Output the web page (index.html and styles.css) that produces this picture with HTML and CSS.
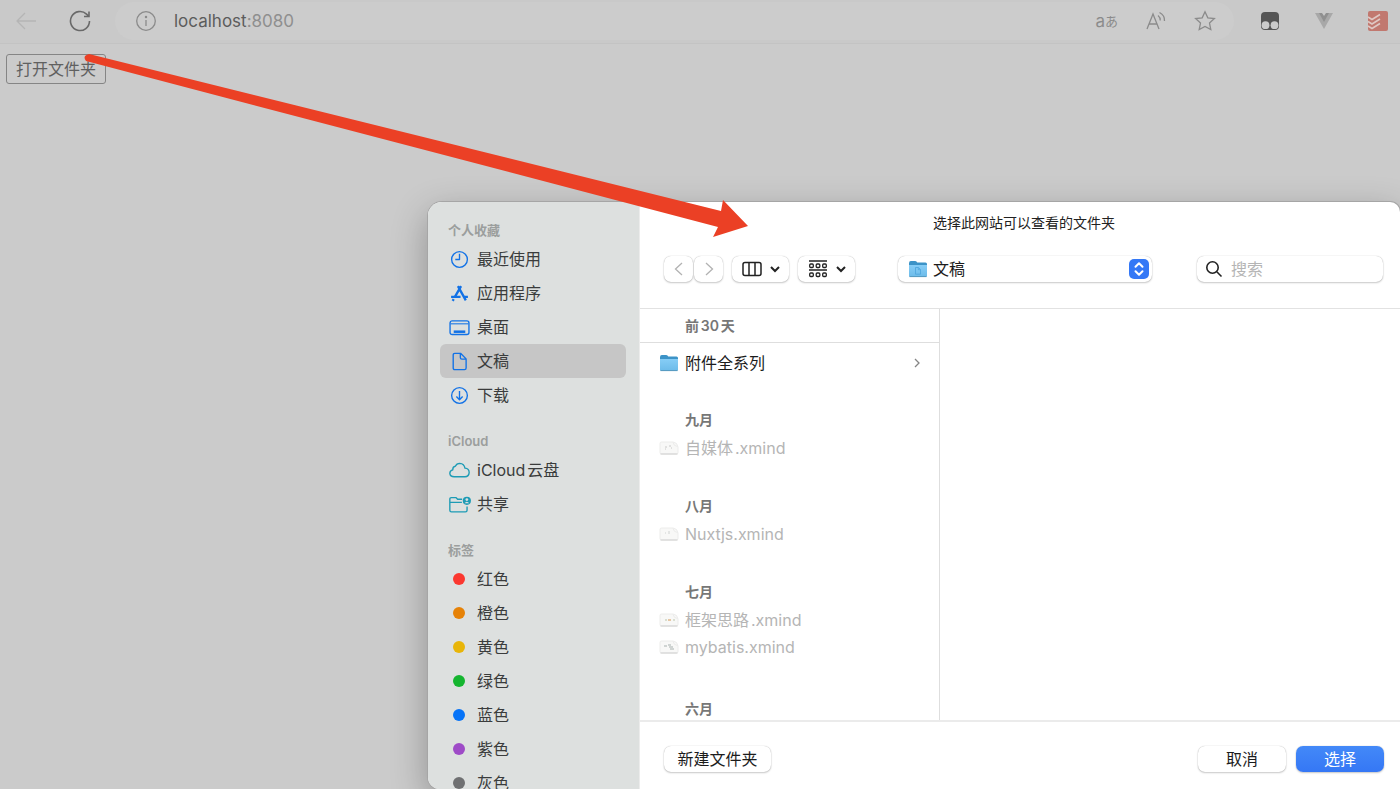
FILE: index.html
```html
<!DOCTYPE html>
<html lang="zh-CN">
<head>
<meta charset="utf-8">
<title>localhost:8080</title>
<link rel="stylesheet" href="styles.css">
</head>
<body>
<svg class="sprite" aria-hidden="true">
  <defs>
    <linearGradient id="folder-front" x1="0" y1="0" x2="0" y2="1">
      <stop offset="0" stop-color="#86cdf6"/><stop offset="1" stop-color="#6cbbe9"/>
    </linearGradient>
    <symbol id="folder" viewBox="0 0 20 18">
      <path d="M1 3.200Q1 1 2.800 1h4.400q.8 0 1.300.6l.7.9h8.300Q19 2.500 19 4v4H1z" fill="#3c93c7"/>
      <path d="M1 5h18v10.500q0 1.500-1.500 1.500h-15Q1 17 1 15.500z" fill="url(#folder-front)"/>
      <path d="M1.500 16.600h17" stroke="#5799be" stroke-width="1"/>
    </symbol>
    <symbol id="mind" viewBox="0 0 20 14">
      <path d="M2.500 1h11.500q4.500.5 5 5v5.500q0 1.500-1.500 1.500h-15Q1 13 1 11.500v-9Q1 1 2.500 1z" fill="#f8f8f7" stroke="#ececeb"/>
      <path d="M1.500 13h17" stroke="#cfcfce"/>
      <path d="M14 1.500q.5 3.500 4.500 4" fill="none" stroke="#ececeb"/>
    </symbol>
  </defs>
</svg>

<header class="browser-bar">
  <button class="bar-button bar-button--off" aria-label="后退">
    <svg width="22" height="20" viewBox="0 0 22 20"><path d="M21 10H2M10 2l-8 8 8 8"/></svg>
  </button>
  <button class="bar-button bar-button--reload" aria-label="刷新">
    <svg width="22" height="22" viewBox="0 0 22 22"><path d="M20.500 11a9.500 9.500 0 1 1-3-6.900L20 6.500M20 1.500v5h-5"/></svg>
  </button>
  <div class="address">
    <svg class="info" width="20" height="20" viewBox="0 0 20 20"><circle cx="10" cy="10" r="9.300"/><path d="M10 9v6"/><circle cx="10" cy="6" r=".6"/></svg>
    <span class="url">localhost<span class="port">:8080</span></span>
    <span class="address-tools">
      <button class="bar-button translate" aria-label="翻译"><span>a</span>あ</button>
      <button class="bar-button" aria-label="朗读">
        <svg width="22" height="20" viewBox="0 0 22 20"><path d="M2 18 8 3l6 15M4 13h8M13 4.500q2.500 2 2.200 5M14.500 1.500q5.500 3 5 8.500"/></svg>
      </button>
      <button class="bar-button" aria-label="收藏">
        <svg width="22" height="22" viewBox="0 0 22 22"><path d="m11 1.800 2.800 6 6.600.8-4.900 4.500 1.300 6.500-5.800-3.200-5.800 3.200 1.300-6.500-4.900-4.500 6.600-.8z"/></svg>
      </button>
    </span>
  </div>
  <div class="extensions">
    <svg width="20" height="20" viewBox="0 0 20 20"><rect x="1" y="1" width="18" height="18" rx="4" fill="#555"/><circle cx="5.500" cy="14.200" r="3.900" fill="#cbcbcb"/><circle cx="14.500" cy="14.200" r="3.900" fill="#cbcbcb"/></svg>
    <svg width="20" height="18" viewBox="0 0 20 18"><path d="M1 1h6l3 4 3-4h6l-9 16z" fill="#a8a8a8"/><path d="M5 1h3l2 3 2-3h3l-5 9z" fill="#909090"/></svg>
    <svg width="20" height="20" viewBox="0 0 20 20"><rect width="20" height="20" rx="2" fill="#c1786f"/><path d="m0 6 4 2.500 8-5M0 10.500 4 13l8-5M0 15l4 2.500 8-5" fill="none" stroke="#dfc8c4" stroke-width="1.600"/></svg>
  </div>
</header>

<main class="page">
  <button class="open-folder">打开文件夹</button>
</main>

<section class="dialog" role="dialog" aria-labelledby="dialog-title">
  <nav class="sidebar">
    <section>
      <h2>个人收藏</h2>
      <ul>
        <li><svg viewBox="0 0 20 20"><circle cx="10" cy="10" r="7.500"/><path d="M10 4.500V10H6"/></svg>最近使用</li>
        <li><svg viewBox="0 0 20 20"><path d="M8.500 3 16 16.500M11.500 3 5.500 13.500M4.500 15.300 3.500 17" stroke-width="2.200"/><path d="M2 13.200h9M14.500 13.200H18" stroke-width="2"/></svg>应用程序</li>
        <li><svg viewBox="0 0 20 20"><rect x="1" y="3.700" width="18" height="13" rx="2"/><path d="M1.500 6.500h17" stroke-width="1"/><path d="M4.500 14h11" stroke-width="2.400"/></svg>桌面</li>
        <li class="selected"><svg viewBox="0 0 20 20"><path d="M5.500 2.200H11l5.300 5.300v8.800q0 1.500-1.500 1.500H5.500Q4 17.800 4 16.300V3.700q0-1.500 1.500-1.500zM10.800 2.500v3.700q0 1.500 1.500 1.500H16"/></svg>文稿</li>
        <li><svg viewBox="0 0 20 20"><circle cx="10" cy="10" r="7.500"/><path d="M10 5.800v8M7 11l3 3 3-3"/></svg>下载</li>
      </ul>
    </section>
    <section class="cloud">
      <h2>iCloud</h2>
      <ul>
        <li><svg viewBox="0 0 20 20"><path d="M5 16Q1 15.700.8 12.700q0-2.700 2.800-3.300Q3.500 6.300 6 6q1.200-2.800 4.200-2.800 4.300.2 5 4.600 4 .4 4 4.200-.3 3.800-4 4z"/></svg>iCloud云盘</li>
        <li><svg viewBox="0 0 20 20"><path d="M12.500 5H8.200L6.800 3.500H2.200Q.8 3.500.8 5v10.500Q.8 17 2.300 17h13.400q1.500 0 1.500-1.500V12M.8 8h11.500"/><circle cx="17" cy="6.500" r="3.900" fill="#1d9bb5" stroke="none"/><circle cx="17" cy="5.300" r="1.300" fill="#dde0df" stroke="none"/><path d="M14.700 8.800q2.300-3 4.600 0z" fill="#dde0df" stroke="none"/></svg>共享</li>
      </ul>
    </section>
    <section>
      <h2>标签</h2>
      <ul>
        <li><i class="tag red"></i>红色</li>
        <li><i class="tag orange"></i>橙色</li>
        <li><i class="tag yellow"></i>黄色</li>
        <li><i class="tag green"></i>绿色</li>
        <li><i class="tag blue"></i>蓝色</li>
        <li><i class="tag purple"></i>紫色</li>
        <li><i class="tag gray"></i>灰色</li>
      </ul>
    </section>
  </nav>

  <div class="content">
    <h1 id="dialog-title">选择此网站可以查看的文件夹</h1>
    <div class="toolbar">
      <div class="history">
        <button aria-label="上一个"><svg width="12" height="16" viewBox="0 0 12 16"><path d="M9 2 2.500 8 9 14"/></svg></button>
        <button aria-label="下一个"><svg width="12" height="16" viewBox="0 0 12 16"><path d="m3 2 6.500 6L3 14"/></svg></button>
      </div>
      <button class="view-button" aria-label="分栏显示">
        <svg width="20" height="16" viewBox="0 0 20 16"><rect x="1" y="1.500" width="18" height="13" rx="2"/><path d="M7 2v12M13 2v12"/></svg>
        <svg width="10" height="8" viewBox="0 0 10 8"><path d="m1 2 4 4 4-4" stroke-width="2"/></svg>
      </button>
      <button class="view-button" aria-label="分组方式">
        <svg width="20" height="18" viewBox="0 0 20 18"><path d="M1 1h18M1 10h18"/><g stroke-width="1.300"><rect x="1.700" y="4" width="3.600" height="3.500" rx="1"/><rect x="8.200" y="4" width="3.600" height="3.500" rx="1"/><rect x="14.700" y="4" width="3.600" height="3.500" rx="1"/><rect x="1.700" y="13" width="3.600" height="3.500" rx="1"/><rect x="8.200" y="13" width="3.600" height="3.500" rx="1"/><rect x="14.700" y="13" width="3.600" height="3.500" rx="1"/></g></svg>
        <svg width="10" height="8" viewBox="0 0 10 8"><path d="m1 2 4 4 4-4" stroke-width="2"/></svg>
      </button>
      <div class="location">
        <svg class="folder-icon" viewBox="0 0 20 18"><use href="#folder"/><path d="M7.500 7.500h3l2 2v4.700h-5zM10.300 7.700v2h2" fill="none" stroke="#4da5dc" stroke-width=".8"/></svg>
        <select aria-label="位置"><option>文稿</option></select>
        <svg class="stepper" width="20" height="20" viewBox="0 0 20 20"><rect width="20" height="20" rx="5"/><path d="m6.500 7.800 3.500-3.500 3.500 3.500M6.500 12.200l3.500 3.500 3.500-3.500"/></svg>
      </div>
      <label class="search">
        <svg width="18" height="18" viewBox="0 0 18 18"><circle cx="7.500" cy="7.500" r="5.700"/><path d="m11.800 11.800 4.700 4.700"/></svg>
        <input type="search" placeholder="搜索" aria-label="搜索">
      </label>
    </div>

    <div class="browser">
      <div class="column">
        <h3 class="pinned">前30天</h3>
        <ul class="first">
          <li class="is-folder"><svg class="folder-icon" viewBox="0 0 20 18"><use href="#folder"/></svg><span>附件全系列</span><svg class="more" width="8" height="10" viewBox="0 0 8 10"><path d="m2 1 4 4-4 4"/></svg></li>
        </ul>
        <h3>九月</h3>
        <ul><li><svg class="mind-icon" viewBox="0 0 20 14"><use href="#mind"/><path d="M6 6h2M10 5h2M6 8h1M12 7h1" stroke="#bdbdbd" stroke-width=".8"/></svg><span>自媒体.xmind</span></li></ul>
        <h3>八月</h3>
        <ul><li><svg class="mind-icon" viewBox="0 0 20 14"><use href="#mind"/><path d="M6 6h1M10 4v3" stroke="#c4c8c8" stroke-width=".8"/></svg><span>Nuxtjs.xmind</span></li></ul>
        <h3>七月</h3>
        <ul class="last">
          <li><svg class="mind-icon" viewBox="0 0 20 14"><use href="#mind"/><path d="M6 7h2M14 7h2" stroke="#b9c5a9"/><path d="M9 7h3" stroke="#e2b789" stroke-width="1.500"/></svg><span>框架思路.xmind</span></li>
          <li><svg class="mind-icon" viewBox="0 0 20 14"><use href="#mind"/><path d="M5 6h3M9 5h3M10 7h4M11 9h4" stroke="#a7b0ae"/></svg><span>mybatis.xmind</span></li>
        </ul>
        <h3>六月</h3>
      </div>
      <div class="preview"></div>
    </div>

    <footer>
      <button class="new-folder">新建文件夹</button>
      <button>取消</button>
      <button class="primary">选择</button>
    </footer>
  </div>
</section>

<svg class="arrow" width="670" height="190" viewBox="0 0 670 190" aria-hidden="true"><path d="M9 4 641 161 643 150 668 176 633 187 638 177 6 11Q2 6 9 4z"/></svg>
</body>
</html>
```
FILE: styles.css
```css
* { box-sizing: border-box; }

body {
  margin: 0;
  min-height: 100vh;
  position: relative;
  overflow: hidden;
  background: #cbcbcb;
  color: #1c1c1c;
  font: 16px/24px Inter, "Noto Sans CJK SC", sans-serif;
  text-autospace: normal;
}

h1, h2, h3, ul { margin: 0; padding: 0; }
ul { list-style: none; }
button, input, select { font: inherit; color: inherit; }
svg { flex: none; fill: none; }
.sprite { position: absolute; width: 0; height: 0; }

/* browser chrome */
.browser-bar {
  display: flex;
  align-items: center;
  height: 44px;
  padding: 0 12px 2px 15px;
  background: #c9c9c9;
  border-bottom: 1px solid #c3c3c3;
}
.bar-button {
  display: flex;
  align-items: center;
  padding: 0;
  border: 0;
  background: none;
  stroke: #8b8b8b;
  stroke-width: 1.3;
}
.bar-button--off { stroke: #b5b5b5; }
.bar-button--reload { margin-left: 32px; stroke: #696969; stroke-width: 1.6; }
.address {
  flex: 1;
  display: flex;
  align-items: center;
  height: 38px;
  margin-left: 24px;
  padding: 0 18px 0 21px;
  border-radius: 19px;
  background: #ccc;
}
.info { stroke: #8b8b8b; stroke-width: 1.3; }
.url { margin-left: 18px; color: #5c5c5c; font-size: 17px; }
.port { color: #8f8f8f; }
.address-tools { display: flex; align-items: center; gap: 27px; margin-left: auto; }
.translate { color: #8b8b8b; font-size: 13px; line-height: 20px; }
.translate span { font-size: 17px; }
.extensions { display: flex; align-items: center; gap: 34px; margin-left: 26px; }

.page { padding: 10px 6px; }
.open-folder {
  height: 30px;
  padding: 0 9px;
  border: 1px solid #858585;
  border-radius: 3px;
  background: transparent;
  color: #606060;
}

/* folder picker laid over the page */
.dialog {
  position: absolute;
  inset: 202px 0 0 428px;
  display: flex;
  overflow: hidden;
  border-radius: 14px 10px 0 12px;
  background: #fff;
  box-shadow: 0 0 0 1px #a6a6a6, 0 12px 36px rgba(0, 0, 0, .3);
}
.sidebar {
  flex: none;
  display: flex;
  flex-direction: column;
  gap: 17px;
  width: 212px;
  padding: 16px 13px 0 12px;
  background: #dde0df;
  border-right: 1px solid #ececec;
  color: #3a3c3c;
}
.sidebar h2 {
  padding-left: 8px;
  color: #9b9e9d;
  font-size: 13px;
  font-weight: 600;
  line-height: 24px;
}
.sidebar li {
  display: flex;
  align-items: center;
  gap: 7px;
  height: 34px;
  padding-left: 9px;
  border-radius: 6px;
}
.sidebar li.selected { background: #c6c6c6; }
.sidebar svg {
  width: 21px;
  height: 21px;
  overflow: visible;
  stroke: #1272e6;
  stroke-width: 1.3;
  stroke-linejoin: round;
}
.sidebar .cloud svg { stroke: #1d9bb5; }
.tag { width: 12px; height: 12px; margin: 0 5px 0 4px; border-radius: 50%; }
.red { background: #fb3830; }
.orange { background: #e68207; }
.yellow { background: #e8b509; }
.green { background: #14b52f; }
.blue { background: #0673f7; }
.purple { background: #9e4bc7; }
.gray { background: #6f7072; }

.content { flex: 1; min-width: 0; display: flex; flex-direction: column; }
.content h1 {
  padding: 9px 0 9px 8px;
  color: #222;
  font-size: 14px;
  font-weight: 400;
  line-height: 24px;
  text-align: center;
}
.toolbar {
  display: flex;
  align-items: center;
  height: 65px;
  padding: 0 17px 14px 24px;
  border-bottom: 1px solid #e2e2e2;
}
.history { display: flex; gap: 1px; }
.toolbar button, .location, .search, footer button {
  border: 0;
  border-radius: 7px;
  background: #fff;
  box-shadow: 0 0 1px rgba(0, 0, 0, .3), 0 1px 2px rgba(0, 0, 0, .2);
}
.toolbar button {
  flex: none;
  display: flex;
  align-items: center;
  justify-content: center;
  height: 26px;
  padding: 0;
  stroke: #222;
  stroke-width: 1.5;
}
.toolbar .history button { width: 29px; stroke: #b2b2b2; stroke-width: 1.3; }
.toolbar .view-button { gap: 8px; width: 57px; margin-left: 9px; }
.location {
  flex: none;
  display: flex;
  align-items: center;
  width: 254px;
  height: 26px;
  margin-left: 43px;
  padding: 0 3px 0 10px;
}
.folder-icon { width: 20px; height: 18px; }
.location select {
  flex: 1;
  height: 26px;
  margin-left: 5px;
  padding: 0;
  border: 0;
  appearance: none;
  background: none;
}
.stepper rect { fill: #3478f6; }
.stepper path { stroke: #fff; stroke-width: 2; stroke-linecap: round; stroke-linejoin: round; }
.search {
  flex: 1;
  min-width: 0;
  display: flex;
  align-items: center;
  gap: 8px;
  height: 26px;
  margin-left: 45px;
  padding: 0 8px;
}
.search svg { stroke: #222; stroke-width: 1.6; }
.search input { flex: 1; min-width: 0; height: 26px; padding: 0; border: 0; outline: 0; background: none; }
.search input::placeholder { color: #b5b5b5; }

.browser { flex: 1; min-height: 0; display: flex; }
.column { flex: none; width: 300px; overflow: hidden; border-right: 1px solid #dedede; }
.column h3 {
  padding-left: 45px;
  color: #777;
  font-size: 14px;
  font-weight: 600;
  line-height: 28px;
}
.column .pinned { padding-top: 3px; padding-bottom: 2px; border-bottom: 1px solid #dedede; }
.column ul { padding-bottom: 31px; color: #b5b5b5; }
.column ul.first { padding-top: 6px; padding-bottom: 30px; }
.column ul.last { padding-bottom: 35px; }
.column li { display: flex; align-items: center; gap: 6px; height: 27px; padding: 0 18px 0 19px; }
.column .is-folder { color: #1c1c1c; }
.mind-icon { width: 20px; height: 14px; }
.more { margin-left: auto; stroke: #858585; stroke-width: 1.3; }
.preview { flex: 1; }

footer {
  display: flex;
  align-items: center;
  gap: 10px;
  height: 69px;
  padding: 6px 16px 0 24px;
  border-top: 2px solid #ebebeb;
}
footer button { width: 88px; height: 26px; padding: 0; line-height: 24px; }
footer .new-folder { width: 107px; margin-right: auto; }
footer .primary { background: linear-gradient(#4389f8, #3577f5); color: #fff; }

/* annotation drawn over page and dialog */
.arrow { position: absolute; left: 80px; top: 50px; fill: #eb4025; pointer-events: none; }
```
